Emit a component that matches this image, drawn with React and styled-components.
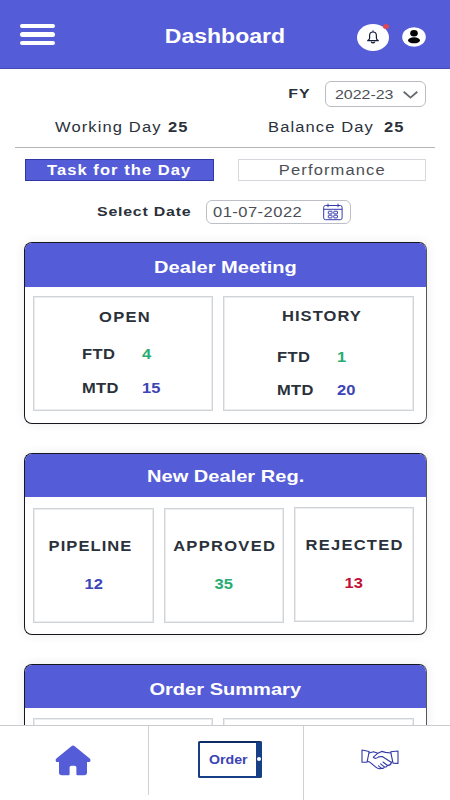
import styled, { createGlobalStyle } from "styled-components";

const GlobalStyle = createGlobalStyle`
    * {
        box-sizing: border-box;
    }
    body {
        margin: 0;
        background: #fff;
        font-family: "Liberation Sans", Arial, sans-serif;
        color: #2a313b;
    }
`;
const Screen = styled.div`
    width: 450px;
    height: 800px;
    display: flex;
    flex-direction: column;
    overflow: hidden;
    background: #fff;
`;
/* Wide face: Helvetica stretched sideways */
const Text = styled.span`
    display: inline-block;
    white-space: nowrap;
    font-size: ${props => props.$size || 14}px;
    line-height: 20px;
    font-weight: ${props => props.$regular ? 400 : 700};
    letter-spacing: ${props => props.$spacing || 0}px;
    margin-right: -${props => props.$spacing || 0}px;
    color: ${props => props.$color || 'inherit'};
    transform: scaleX(1.18);
    transform-origin: ${props => props.$left ? 'left' : 'center'} center;
`;

const Header = styled.header`
    flex: none;
    height: 69px;
    padding: 1px 24px 0 20px;
    display: grid;
    grid-template-columns: 70px 1fr 70px;
    align-items: center;
    background: #545cd7;
    border-bottom: 1px solid #434bb5;
    color: #fff;
`;
const MenuButton = styled.div`
    width: 35px;
    display: flex;
    flex-direction: column;
    gap: 4px;
`;
const MenuBar = styled.div`
    height: 4.4px;
    border-radius: 3px;
    background: #fff;
`;
const Title = styled.div`
    text-align: center;
    padding: 3px 0 0 4px;
`;
const HeaderIcons = styled.div`
    display: flex;
    align-items: center;
    justify-content: flex-end;
    gap: 13px;
    padding-top: 5px;
`;
const BellCircle = styled.div`
    position: relative;
    flex: none;
    width: 32px;
    height: 27px;
    display: flex;
    align-items: center;
    justify-content: center;
    border-radius: 50%;
    background: #fff;
`;
const Dot = styled.i`
    position: absolute;
    top: 0;
    right: 0;
    width: 6px;
    height: 5px;
    border-radius: 50%;
    background: #df4656;
`;

const Content = styled.main`
    flex: 1;
    min-height: 0;
    overflow: hidden;
    padding-top: 12px;
`;
const YearRow = styled.div`
    height: 26px;
    padding-right: 24px;
    display: flex;
    justify-content: flex-end;
    align-items: center;
    gap: 17px;
`;
const YearSelect = styled.div`
    width: 101px;
    height: 26px;
    padding: 1px 7px 0 9px;
    display: flex;
    align-items: center;
    justify-content: space-between;
    border: 1px solid #b9bdc2;
    border-radius: 6px;
    color: #4b4f55;
`;
const DayRow = styled.div`
    height: 41px;
    margin: 0 15px;
    padding: 10px 0 0 40px;
    display: grid;
    grid-template-columns: 113px 100px 116px 30px;
    border-bottom: 1px solid #b5b5b5;
`;
const Tabs = styled.div`
    display: flex;
    justify-content: space-between;
    padding: 11px 24px 0 25px;
`;
const Tab = styled.div`
    width: 188.5px;
    height: 22px;
    padding-right: ${props => props.$active ? 2 : 0}px;
    display: flex;
    align-items: center;
    justify-content: center;
    border: 1px solid ${props => props.$active ? '#3038a8' : '#d5d8dc'};
    background: ${props => props.$active ? '#545cd7' : '#fff'};
    color: ${props => props.$active ? '#fff' : '#4b4f55'};
`;
const DateRow = styled.div`
    margin-top: 19px;
    padding-left: 97px;
    height: 24px;
    display: grid;
    grid-template-columns: 109px 145px;
    align-items: center;
`;
const DateInput = styled.div`
    height: 24px;
    padding: 0 7px 0 6px;
    display: flex;
    align-items: center;
    justify-content: space-between;
    border: 1px solid #bcc0c6;
    border-radius: 6px;
    color: #4b4f55;
`;

const CardList = styled.div`
    display: flex;
    flex-direction: column;
    gap: 29px;
    padding: 18px 23px 0 24px;
`;
const Card = styled.section`
    height: 182px;
    border: 1px solid #15171f;
    border-right-color: #55585e;
    border-radius: 8px;
    overflow: hidden;
    background: #fff;
    box-shadow: 0 0 12px rgba(0, 0, 0, 0.08);
`;
const CardHeader = styled.h2`
    margin: 0;
    height: ${props => props.$height || 44}px;
    padding-top: ${props => props.$top || 0}px;
    display: flex;
    align-items: center;
    justify-content: center;
    background: #545cd7;
    color: #fff;
`;
const Boxes = styled.div`
    display: grid;
    grid-template-columns: ${props => props.$columns};
    gap: 10px;
    padding: ${props => props.$top || 9}px 0 0 8px;
`;
const Box = styled.div`
    height: 115px;
    padding-top: ${props => props.$top}px;
    margin-top: ${props => props.$raised ? -1 : 0}px;
    border: 1px solid #d0d4d7;
    box-shadow: inset 0 0 0 1px #eaecee;
`;
const BoxTitle = styled.div`
    height: 20px;
    text-align: center;
    padding-left: ${props => props.$shift || 0}px;
    padding-right: ${props => props.$shiftLeft || 0}px;
    margin-bottom: ${props => props.$gap}px;
`;
const Metric = styled.div`
    height: 20px;
    margin-bottom: 13.5px;
    padding-left: ${props => props.$indent}px;
    display: grid;
    grid-template-columns: 60px 40px;
`;
const Count = styled.div`
    height: 20px;
    text-align: center;
`;

const BottomNav = styled.nav`
    flex: none;
    height: 75px;
    display: grid;
    grid-template-columns: 149px 155px 1fr;
    border-top: 1px solid #c9cbcf;
    background: #fff;
`;
const NavItem = styled.div`
    height: ${props => props.$short ? 69 : 74}px;
    display: flex;
    align-items: flex-start;
    justify-content: center;
    padding: ${props => props.$pad};
    border-right: ${props => props.$last ? 0 : 1}px solid #d0d2d6;
`;
const OrderDevice = styled.div`
    width: 64px;
    height: 37px;
    padding-left: 2px;
    display: flex;
    align-items: center;
    justify-content: center;
    border: 2px solid #173f86;
    border-top-color: #0f2b66;
    border-right-width: 6px;
    border-radius: 2px;
    position: relative;
`;
const DeviceButton = styled.i`
    position: absolute;
    right: -5px;
    top: 14px;
    width: 4px;
    height: 4px;
    border-radius: 50%;
    background: #fff;
`;

const GREEN = "#27ad72";
const BLUE = "#3d44b5";
const RED = "#c21135";

const BellIcon = () => (
    <svg width="14" height="14" viewBox="0 0 14 14" fill="none" stroke="#141c38" strokeWidth="1.2" strokeLinejoin="round" strokeLinecap="round">
        <path d="M7 .8V2M3.600 8.200V5.800C3.600 3.500 4.900 2 7 2s3.400 1.500 3.400 3.800v2.400c0 1 .8 1.500 1.900 2.500H1.700c1.100-1 1.900-1.500 1.900-2.500Z" />
        <path d="M5.400 12.100c.6.900 2.600.9 3.200 0" />
    </svg>
);

const ProfileIcon = () => (
    <svg width="24" height="20" viewBox="0 0 24 20">
        <ellipse cx="12" cy="10" rx="11.8" ry="9.8" fill="#fff" />
        <ellipse cx="12" cy="6.3" rx="3.8" ry="3.2" fill="#050505" />
        <ellipse cx="12" cy="13.3" rx="6" ry="3" fill="#050505" />
    </svg>
);

const ChevronIcon = () => (
    <svg width="15" height="8" viewBox="0 0 15 8" fill="none" stroke="#666a70" strokeWidth="1.9">
        <path d="M.7.8 7.5 6.6 14.3.8" />
    </svg>
);

const CalendarIcon = () => (
    <svg width="20" height="18" viewBox="0 0 20 18" fill="none" stroke="#343bad" strokeWidth="1">
        <rect x=".7" y="2.5" width="18.4" height="14.2" rx="1.8" />
        <path d="M.7 6.3h18.4M5 .6v3.6M15 .6v3.6" />
        <rect x="5.3" y="8.2" width="3.7" height="2.7" rx=".5" />
        <rect x="10.8" y="8.2" width="3.7" height="2.7" rx=".5" />
        <rect x="5.3" y="12.2" width="3.7" height="2.7" rx=".5" />
        <rect x="10.8" y="12.2" width="3.7" height="2.7" rx=".5" />
    </svg>
);

const HomeIcon = () => (
    <svg width="36" height="31" viewBox="0 0 36 31" fill="#545cd7">
        <path d="M16.400 1.200c1-.8 2.300-.8 3.300 0L34.700 13.400c1.300 1.200.9 3.600-.8 3.600H32v10.600c0 1.700-1 2.700-2.800 2.700H22.600c-.8 0-1.200-.4-1.200-1.100v-6.600c0-1.200-.8-1.900-1.900-1.900h-3c-1.100 0-1.900.7-1.900 1.900v6.600c0 .7-.4 1.100-1.200 1.100H6.800C5 30.300 4 29.300 4 27.600V17H2.200C.5 17 .1 14.600 1.400 13.400Z" />
    </svg>
);

const HandshakeIcon = () => (
    <svg width="38" height="21" viewBox="0 0 38 21" fill="none" stroke="#3038a8" strokeWidth="1.1" strokeLinejoin="round" strokeLinecap="round">
        <path d="M1 1 8.200 2.500 6 13.300H1Z" />
        <path d="M37 2 29.700 2.800 32 14.200 37 14.400Z" />
        <path d="M8 4 12.500 2.800 17 4.200M29.800 4 24.500 3.400 20.600 2.400 17 4.200 12.300 8.100C13.500 10 15.900 9.500 17.500 7.900L21.300 7.500 30.500 13.500 31.300 12.500" />
        <path d="M6.500 12.300 9 13.300 14.800 18.200C16.500 19.600 18.800 20.100 20.300 19.200L17.500 16.800M20.300 19.200C21.800 19.800 23.200 19 23.300 17.900L19.600 14.900M23.300 17.900C25 18.400 26.400 17.500 26.200 16.200L22 13M26.200 16.200C27.500 16.500 29.700 15.800 30.500 13.500" />
    </svg>
);

const MetricRow = ({ name, value, color, indent }) => (
    <Metric $indent={indent}>
        <div><Text $left $spacing={0.3}>{name}</Text></div>
        <div><Text $left $color={color}>{value}</Text></div>
    </Metric>
);

const App = () => {

    return (
        <>
            <GlobalStyle />
            <Screen>
                <Header>
                    <MenuButton>
                        <MenuBar />
                        <MenuBar />
                        <MenuBar />
                    </MenuButton>
                    <Title>
                        <Text $size={19.5}>Dashboard</Text>
                    </Title>
                    <HeaderIcons>
                        <BellCircle>
                            <BellIcon />
                            <Dot />
                        </BellCircle>
                        <ProfileIcon />
                    </HeaderIcons>
                </Header>
                <Content>
                    <YearRow>
                        <Text $size={13.5} $spacing={0.8}>FY</Text>
                        <YearSelect>
                            <Text $left $regular $size={13.5}>2022-23</Text>
                            <ChevronIcon />
                        </YearSelect>
                    </YearRow>
                    <DayRow>
                        <div><Text $left $regular $spacing={0.95}>Working Day</Text></div>
                        <div><Text $left $spacing={0.8}>25</Text></div>
                        <div><Text $left $regular $spacing={0.95}>Balance Day</Text></div>
                        <div><Text $left $spacing={0.8}>25</Text></div>
                    </DayRow>
                    <Tabs>
                        <Tab $active><Text $spacing={0.9}>Task for the Day</Text></Tab>
                        <Tab><Text $regular $spacing={0.95}>Performance</Text></Tab>
                    </Tabs>
                    <DateRow>
                        <div><Text $left $size={13.5} $spacing={0.65}>Select Date</Text></div>
                        <DateInput>
                            <Text $left $regular $spacing={0.4}>01-07-2022</Text>
                            <CalendarIcon />
                        </DateInput>
                    </DateRow>
                    <CardList>
                        <Card>
                            <CardHeader $top={6}><Text $size={17}>Dealer Meeting</Text></CardHeader>
                            <Boxes $columns="180px 191px">
                                <Box $top={10}>
                                    <BoxTitle $shift={2} $gap={17}><Text $spacing={1.1}>OPEN</Text></BoxTitle>
                                    <MetricRow name="FTD" value="4" color={GREEN} indent={48} />
                                    <MetricRow name="MTD" value="15" color={BLUE} indent={48} />
                                </Box>
                                <Box $top={9}>
                                    <BoxTitle $shift={5} $gap={20.5}><Text $spacing={0.9}>HISTORY</Text></BoxTitle>
                                    <MetricRow name="FTD" value="1" color={GREEN} indent={53} />
                                    <MetricRow name="MTD" value="20" color={BLUE} indent={53} />
                                </Box>
                            </Boxes>
                        </Card>
                        <Card>
                            <CardHeader $height={43} $top={2}><Text $size={17}>New Dealer Reg.</Text></CardHeader>
                            <Boxes $columns="121px 120px 120px" $top={11}>
                                <Box $top={27}>
                                    <BoxTitle $shiftLeft={6} $gap={18}><Text $spacing={0.9}>PIPELINE</Text></BoxTitle>
                                    <Count><Text $color={BLUE}>12</Text></Count>
                                </Box>
                                <Box $top={27}>
                                    <BoxTitle $gap={18}><Text $spacing={1.1}>APPROVED</Text></BoxTitle>
                                    <Count><Text $color={GREEN}>35</Text></Count>
                                </Box>
                                <Box $top={27} $raised>
                                    <BoxTitle $shift={1} $gap={18}><Text $spacing={1.05}>REJECTED</Text></BoxTitle>
                                    <Count><Text $color={RED}>13</Text></Count>
                                </Box>
                            </Boxes>
                        </Card>
                        <Card>
                            <CardHeader $height={43} $top={6}><Text $size={17}>Order Summary</Text></CardHeader>
                            <Boxes $columns="180px 191px" $top={10}>
                                <Box />
                                <Box />
                            </Boxes>
                        </Card>
                    </CardList>
                </Content>
                <BottomNav>
                    <NavItem $short $pad="19px 3px 0 0"><HomeIcon /></NavItem>
                    <NavItem $pad="15px 0 0 7px">
                        <OrderDevice>
                            <Text $size={12} $color={BLUE}>Order</Text>
                            <DeviceButton />
                        </OrderDevice>
                    </NavItem>
                    <NavItem $last $pad="23px 0 0 6px"><HandshakeIcon /></NavItem>
                </BottomNav>
            </Screen>
        </>
    )
}

export default App;
